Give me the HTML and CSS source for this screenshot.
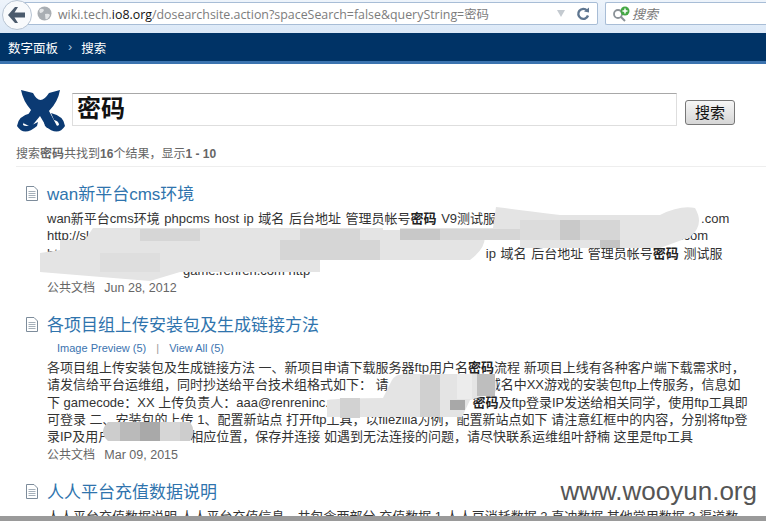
FILE: index.html
```html
<!DOCTYPE html>
<html>
    <head>
        <meta charset="utf-8"/>
        <title>搜索</title>
        <link rel="stylesheet" href="styles.css">
    </head>
    <body>
        <div class="toolbar">
            <div class="back">
                <svg width="20" height="16" viewBox="0 0 20 16"><path d="M8 0 L1 8 L8 16 L11 16 L7.5 10.5 L18 10.5 L18 5.5 L7.5 5.5 L11 0 Z" fill="#4a5a6c"/></svg>
            </div>
            <div class="urlbar">
                <svg class="globe" width="15" height="15" viewBox="0 0 15 15"><circle cx="7.5" cy="7.5" r="7" fill="#a9aeb3"/><path d="M3 3 Q6 2 7 4 Q6 7 3 7 Q1.500 5 3 3 Z M8 8 Q12 7 13 9 Q11 14 8.500 13 Z" fill="#e3e5e7"/></svg>
                <span class="url">wiki.tech.<span class="domain">io8.org</span>/dosearchsite.action?spaceSearch=false&amp;queryString=密码</span>
                <span class="drop"></span>
                <svg class="reload" width="14" height="14" viewBox="0 0 14 14"><path d="M11 3.500 A5 5 0 1 0 12 8.500" fill="none" stroke="#5f7690" stroke-width="2.400"/><path d="M8 4.500 L13 5.500 L13 0.500 Z" fill="#5f7690"/></svg>
            </div>
            <div class="searchbar">
                <svg width="20" height="16" viewBox="0 0 20 16"><circle cx="6" cy="8" r="4" fill="none" stroke="#8b9298" stroke-width="1.800"/><path d="M9 11 L13 15" stroke="#8b9298" stroke-width="2"/><circle cx="13" cy="5" r="4.500" fill="#45a845"/><path d="M13 2.500 V7.500 M10.500 5 H15.500" stroke="#fff" stroke-width="1.500"/></svg>
                <span class="engine">搜索</span>
            </div>
        </div>

        <div class="nav">
            <span>数字面板</span>
            <span class="sep">›</span>
            <span>搜索</span>
        </div>

        <div class="page">
            <div class="search_row">
                <svg class="logo" width="50" height="43" viewBox="16 88 50 43">
                    <path d="M21 89 L33 92 Q40 106 49 92 L60 89 Q58 101 49 110 L57 125 L47 127 Q43 120 40 115 Q36 120 31 126 L23 122 Q28 114 31 109 Q23 100 21 89 Z" fill="#0b3a73"/>
                    <path d="M17 125 Q18 115 31 112 L28 119 Q23 120 23 124 Q27 127 38 121 L37 125 Q24 136 17 125 Z" fill="#0b3a73"/>
                    <path d="M65 125 Q64 115 51 112 L54 119 Q59 120 59 124 Q55 127 44 121 L45 125 Q58 136 65 125 Z" fill="#0b3a73"/>
                </svg>
                <div class="query">密码</div>
                <div class="go">搜索</div>
            </div>
            <div class="summary">搜索<b>密码</b>共找到<b>16</b>个结果，显示<b>1 - 10</b></div>

            <div class="result">
                <svg class="doc" width="14" height="15" viewBox="0 0 14 15"><path d="M1.500 .5 H9 L12.500 4 V14.500 H1.500 Z" fill="#fff" stroke="#7d8c9b"/><path d="M3.500 5.500 H10.500 M3.500 7.500 H10.500 M3.500 9.500 H10.500 M3.500 11.500 H10.500" stroke="#a5b0ba"/></svg>
                <div class="title">wan新平台cms环境</div>
                <div class="line line_loose">wan新平台cms环境 phpcms host ip 域名 后台地址 管理员帐号<b>密码</b> V9测试服<span class="gap gap_a"></span>.com</div>
                <div class="line">http://sl<span class="gap gap_b"></span>.com</div>
                <div class="line line_loose">ht<span class="gap gap_c"></span>ip 域名 后台地址 管理员帐号<b>密码</b> 测试服</div>
                <div class="line"><span class="gap gap_d"></span>game.renren.com http</div>
                <div class="meta">公共文档 <span class="date">Jun 28, 2012</span></div>
            </div>

            <div class="result">
                <svg class="doc" width="14" height="15" viewBox="0 0 14 15"><path d="M1.500 .5 H9 L12.500 4 V14.500 H1.500 Z" fill="#fff" stroke="#7d8c9b"/><path d="M3.500 5.500 H10.500 M3.500 7.500 H10.500 M3.500 9.500 H10.500 M3.500 11.500 H10.500" stroke="#a5b0ba"/></svg>
                <div class="title">各项目组上传安装包及生成链接方法</div>
                <div class="links"><a>Image Preview (5)</a><span class="bar">|</span><a>View All (5)</a></div>
                <div class="line">各项目组上传安装包及生成链接方法 一、新项目申请下载服务器ftp用户名<b>密码</b>流程 新项目上线有各种客户端下载需求时，</div>
                <div class="line">请发信给平台运维组，同时抄送给平台技术组格式如下： 请<span class="gap gap_e"></span>域名中XX游戏的安装包ftp上传服务，信息如</div>
                <div class="line">下 gamecode：XX 上传负责人：aaa@renreninc.c<span class="gap gap_f"></span><b>密码</b>及ftp登录IP发送给相关同学，使用ftp工具即</div>
                <div class="line">可登录 二、安装包的上传 1、配置新站点 打开ftp工具，以filezilla为例，配置新站点如下 请注意红框中的内容，分别将ftp登</div>
                <div class="line">录IP及用户<span class="gap gap_g"></span>相应位置，保存并连接 如遇到无法连接的问题，请尽快联系运维组叶舒楠 这里是ftp工具</div>
                <div class="meta">公共文档 <span class="date">Mar 09, 2015</span></div>
            </div>

            <div class="result">
                <svg class="doc" width="14" height="15" viewBox="0 0 14 15"><path d="M1.500 .5 H9 L12.500 4 V14.500 H1.500 Z" fill="#fff" stroke="#7d8c9b"/><path d="M3.500 5.500 H10.500 M3.500 7.500 H10.500 M3.500 9.500 H10.500 M3.500 11.500 H10.500" stroke="#a5b0ba"/></svg>
                <div class="title">人人平台充值数据说明</div>
                <div class="line">人人平台充值数据说明 人人平台充值信息，共包含两部分 充值数据 1 人人豆消耗数据 2 直冲数据 其他常用数据 3 渠道数</div>
            </div>
        </div>

        <!-- mosaic smudges over the hidden parts of the text -->
        <svg class="smudge" width="766" height="521" viewBox="0 0 766 521">
            <g fill="#e4e4e4">
                <path d="M93 228 H383 V230 H483 Q490 245 470 260 H320 V272 H180 L150 281 L40 272 V253 L60 250 V240 H85 Z"/>
                <path d="M400 228 H493 L496 207 Q520 210 560 215 H660 Q680 205 695 208 Q705 225 690 237 L660 248 H520 V240 H400 Z"/>
                <path d="M392 380 Q395 373 410 374 H490 Q500 380 495 393 L470 400 L462 417 H327 V400 Q340 398 383 398 Z"/>
            </g>
            <g fill="#d6d6d6">
                <rect x="140" y="229" width="60" height="12"/>
                <rect x="300" y="229" width="60" height="11"/>
                <rect x="400" y="229" width="40" height="11" fill="#c8c8c8"/>
                <rect x="440" y="229" width="80" height="11"/>
                <rect x="280" y="240" width="100" height="20"/>
                <rect x="100" y="253" width="60" height="19" fill="#dedede"/>
                <rect x="560" y="220" width="20" height="20" fill="#c9c9c9"/>
                <rect x="580" y="220" width="40" height="20"/>
                <rect x="600" y="240" width="20" height="8" fill="#c4c4c4"/>
                <rect x="520" y="220" width="40" height="20" fill="#dcdcdc"/>
                <rect x="420" y="375" width="20" height="42" fill="#d0d0d0"/>
                <rect x="457" y="374" width="15" height="25" fill="#ececec"/>
                <rect x="340" y="398" width="20" height="20" fill="#d2d2d2"/>
                <rect x="477" y="374" width="18" height="22" fill="#bebebe"/>
                <rect x="450" y="400" width="15" height="10" fill="#a8a8a8"/>
            </g>
            <path d="M108 422 H190 Q197 432 190 441 H108 Q98 432 108 422 Z" fill="#cdcdcd"/>
            <rect x="120" y="422" width="20" height="19" fill="#bababa"/>
            <rect x="140" y="422" width="20" height="19" fill="#a9a9a9"/>
            <rect x="160" y="422" width="20" height="19" fill="#d6d6d6"/>
        </svg>

        <div class="stamp">www.wooyun.org</div>
        <div class="edge"></div>
    </body>
</html>
```

FILE: styles.css
```css
html, body {
    margin: 0; padding: 0;
    width: 766px; height: 521px;
    overflow: hidden;
    background: #fff;
}
body {
    position: relative;
    font-family: "Liberation Sans", "Noto Sans CJK SC", sans-serif;
    color: #333;
}
b { color: #222; }

.toolbar {
    display: flex; align-items: flex-start; gap: 7px;
    height: 33px; padding: 2px 0 0 2px;
    box-sizing: border-box;
    background: linear-gradient(#eef4fb, #dbe8f7);
}
.back {
    display: flex; align-items: center; justify-content: center;
    width: 30px; height: 30px;
    margin: -2px -24px 0 0;
    box-sizing: border-box;
    border: 1px solid #b7c4d3; border-radius: 50%;
    background: #f8fafc;
    position: relative; z-index: 1;
}
.urlbar {
    display: flex; align-items: center; gap: 6px;
    flex: 1; height: 23px;
    padding: 0 7px 0 21px;
    box-sizing: border-box;
    border: 1px solid #a8bdd6; border-radius: 2px;
    background: #fff;
}
.url {
    flex: 1;
    font-family: "Open Sans", "Noto Sans CJK SC", sans-serif; font-size: 12.400px;
    color: #7c7c7c;
    white-space: nowrap;
}
.domain { color: #111; }
.drop {
    width: 0; height: 0;
    margin-right: 5px;
    border-left: 4px solid transparent; border-right: 4px solid transparent;
    border-top: 7px solid #c4cad0;
}
.searchbar {
    display: flex; align-items: center;
    width: 161px; height: 23px;
    padding-left: 6px;
    box-sizing: border-box;
    border: 1px solid #a8bdd6; border-right: 0; border-radius: 2px 0 0 2px;
    background: #fff;
}
.engine {
    font-size: 13px; font-style: italic;
    color: #777;
}

.nav {
    display: flex; align-items: center; gap: 9px;
    height: 28px; padding-left: 8px;
    background: #003366;
    border-bottom: 3px solid #3b73af;
    font-size: 12.500px;
    color: #fff;
}
.sep { color: #a9c0da; padding-left: 1px; }

.page { padding: 29px 0 0 16px; }

.search_row {
    display: flex; align-items: flex-start;
}
.logo { margin-top: -4px; }
.query {
    width: 605px; height: 33px;
    margin-left: 6px; padding-left: 4px;
    box-sizing: border-box;
    border: 1px solid #dedede; border-top-color: #a8a8a8;
    font-family: "Liberation Serif", "Noto Sans CJK SC", serif; font-size: 24px; font-weight: bold; line-height: 30px;
    color: #111;
}
.go {
    width: 50px; height: 25px;
    margin: 7px 0 0 8px;
    box-sizing: border-box;
    border: 1px solid #777; border-radius: 3px;
    background: linear-gradient(#f6f6f6, #d6d6d6);
    font-size: 15px; line-height: 23px; text-align: center;
    color: #111;
}

.summary {
    margin: 14px 0 14px; padding-bottom: 3px;
    border-bottom: 1px solid #eee;
    font-size: 12px; line-height: 17px;
    color: #666;
}
.summary b { color: #666; }

.result {
    position: relative;
    padding-left: 31px;
    margin-bottom: 15px;
}
.doc { position: absolute; left: 9px; top: 5px; }
.title {
    font-size: 17px; line-height: 28px;
    color: #2f74ad;
    margin-bottom: 1px;
}
.links {
    margin: -2px 0 2px 10px;
    font-size: 11px; line-height: 18px;
    color: #3b73af;
}
.bar { margin: 0 10px; color: #999; }
.line {
    font-size: 13px; line-height: 17.300px;
    white-space: nowrap;
}
.line_loose { word-spacing: 1px; }
.line b { color: #222; }
.meta {
    margin-top: 1px;
    font-size: 12px; line-height: 17px;
    color: #666;
}
.date { margin-left: 6px; font-size: 12.500px; }

.gap { display: inline-block; }
.gap_a { width: 205px; }
.gap_b { width: 591px; }
.gap_c { width: 428px; }
.gap_d { width: 136px; }
.gap_e { width: 99px; }
.gap_f { width: 137px; }
.gap_g { width: 79px; }

.smudge { position: absolute; left: 0; top: 0; }
.stamp {
    position: absolute; right: 9px; top: 476px;
    font-family: "Liberation Sans", sans-serif; font-size: 26px;
    color: #555;
}
.edge {
    position: absolute; left: 0; right: 0; bottom: 0;
    height: 5px;
    background: #9a9a9a;
}
```
